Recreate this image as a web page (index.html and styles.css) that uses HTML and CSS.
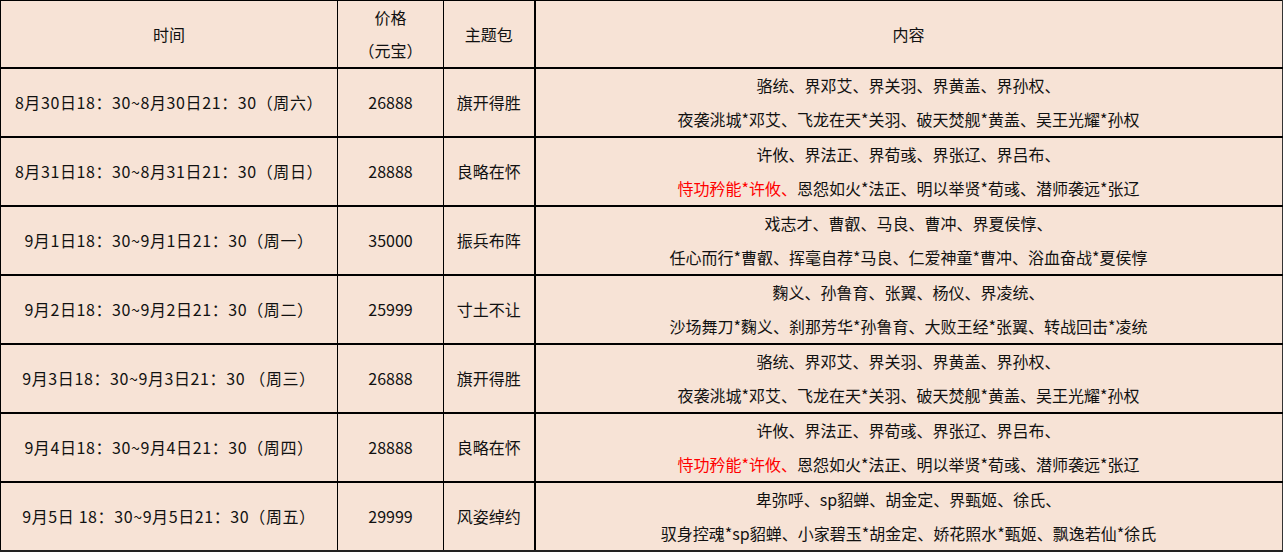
FILE: index.html
```html
<!DOCTYPE html>
<html lang="zh-CN">
<head>
<meta charset="utf-8">
<title>主题包时间表</title>
<link rel="stylesheet" href="styles.css">
</head>
<body>
<table class="sched">
  <colgroup>
    <col class="c-time">
    <col class="c-price">
    <col class="c-pack">
    <col class="c-content">
  </colgroup>
  <thead>
    <tr class="head">
      <th>时间</th>
      <th class="two">价格<br>（元宝）</th>
      <th>主题包</th>
      <th>内容</th>
    </tr>
  </thead>
  <tbody>
    <tr>
      <td class="time">8月30日18：30~8月30日21：30（周六）</td>
      <td>26888</td>
      <td>旗开得胜</td>
      <td class="two">骆统、界邓艾、界关羽、界黄盖、界孙权、<br>夜袭洮城*邓艾、飞龙在天*关羽、破天焚舰*黄盖、吴王光耀*孙权</td>
    </tr>
    <tr>
      <td class="time">8月31日18：30~8月31日21：30（周日）</td>
      <td>28888</td>
      <td>良略在怀</td>
      <td class="two">许攸、界法正、界荀彧、界张辽、界吕布、<br><span class="red">恃功矜能*许攸、</span>恩怨如火*法正、明以举贤*荀彧、潜师袭远*张辽</td>
    </tr>
    <tr>
      <td class="time">9月1日18：30~9月1日21：30（周一）</td>
      <td>35000</td>
      <td>振兵布阵</td>
      <td class="two">戏志才、曹叡、马良、曹冲、界夏侯惇、<br>任心而行*曹叡、挥毫自荐*马良、仁爱神童*曹冲、浴血奋战*夏侯惇</td>
    </tr>
    <tr>
      <td class="time">9月2日18：30~9月2日21：30（周二）</td>
      <td>25999</td>
      <td>寸土不让</td>
      <td class="two">麴义、孙鲁育、张翼、杨仪、界凌统、<br>沙场舞刀*麴义、刹那芳华*孙鲁育、大败王经*张翼、转战回击*凌统</td>
    </tr>
    <tr>
      <td class="time">9月3日18：30~9月3日21：30 （周三）</td>
      <td>26888</td>
      <td>旗开得胜</td>
      <td class="two">骆统、界邓艾、界关羽、界黄盖、界孙权、<br>夜袭洮城*邓艾、飞龙在天*关羽、破天焚舰*黄盖、吴王光耀*孙权</td>
    </tr>
    <tr>
      <td class="time">9月4日18：30~9月4日21：30（周四）</td>
      <td>28888</td>
      <td>良略在怀</td>
      <td class="two">许攸、界法正、界荀彧、界张辽、界吕布、<br><span class="red">恃功矜能*许攸、</span>恩怨如火*法正、明以举贤*荀彧、潜师袭远*张辽</td>
    </tr>
    <tr>
      <td class="time">9月5日 18：30~9月5日21：30（周五）</td>
      <td>29999</td>
      <td>风姿绰约</td>
      <td class="two">卑弥呼、sp貂蝉、胡金定、界甄姬、徐氏、<br>驭身控魂*sp貂蝉、小家碧玉*胡金定、娇花照水*甄姬、飘逸若仙*徐氏</td>
    </tr>
  </tbody>
</table>
</body>
</html>
```

FILE: styles.css
```css
html, body {
  margin: 0;
  padding: 0;
  background: #ffffff;
}

.sched {
  border-collapse: collapse;
  table-layout: fixed;
  width: 1282px;
  background: #f7e3d6;
  font-family: "Noto Sans CJK SC", "Microsoft YaHei", sans-serif;
  font-size: 16px;
  color: #111;
}

.c-time { width: 337px; }
.c-price { width: 106px; }
.c-pack { width: 91px; }
.c-content { width: 748px; }

.sched th,
.sched td {
  font-weight: normal;
  text-align: center;
  vertical-align: middle;
  padding: 0;
  line-height: 33.5px;
  border-left: 1px solid #000;
  border-right: 1px solid #000;
  border-top: 2px solid #000;
  border-bottom: 2px solid #000;
  white-space: nowrap;
}

.sched th:nth-child(3),
.sched td:nth-child(3) {
  border-right: 2px solid #000;
}

.sched th:last-child,
.sched td:last-child {
  border-right: 2px solid #333;
}

.sched thead th {
  border-top: 1px solid #000;
  line-height: 33px;
}

.sched tbody tr:last-child td {
  border-bottom: 2px solid #222;
}

.sched tr {
  height: 66px;
}

.sched .time {
  letter-spacing: 0.6px;
}

.red {
  color: #ff0000;
}
```
